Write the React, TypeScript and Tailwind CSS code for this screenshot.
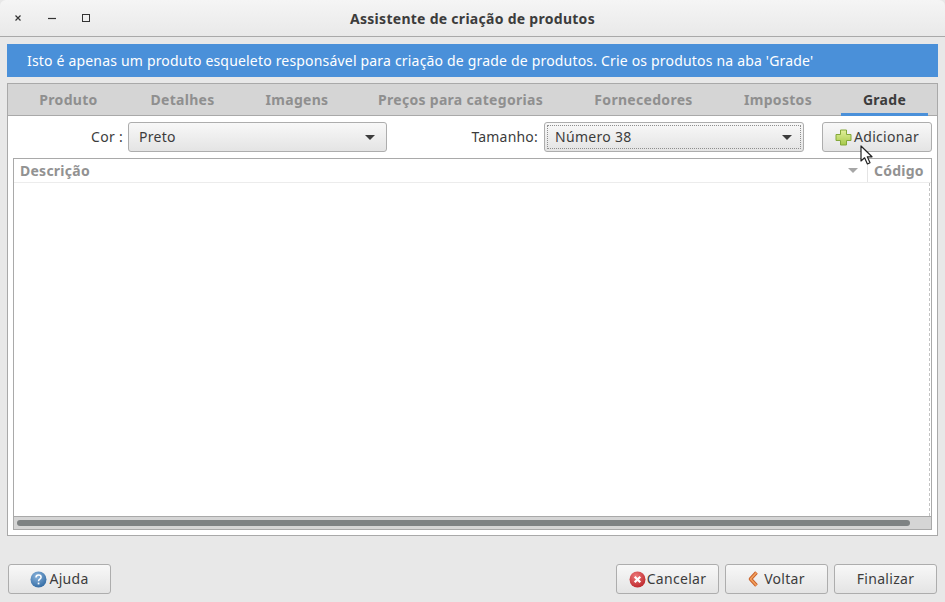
import React from "react";

const btn = "flex items-center justify-center h-[30px] rounded-[3px] border border-[#adadad] bg-gradient-to-b from-[#f8f8f8] to-[#e4e4e4] text-[14px] text-[#3c3c3c] tracking-[0.3px]";

function Caret({ color = "#3c3c3c" }: { color?: string }) {
  return (
    <svg width="10" height="5" viewBox="0 0 10 5" className="shrink-0 block">
      <path d="M0 0H10L5 5Z" fill={color} />
    </svg>
  );
}

function Combo({ value, width, focus }: { value: string; width: string; focus?: boolean }) {
  return (
    <div className={`${btn} ${width} !justify-start relative`}>
      {focus && <div className="absolute inset-[2px] border border-dotted border-[#8e8e8e] rounded-[1px]" />}
      <span className="flex-1 pl-[10px] pb-[2px]">{value}</span>
      <span className="mr-[11px]"><Caret /></span>
    </div>
  );
}

const tabs: [string, string][] = [
  ["Produto", "w-[111px]"],
  ["Detalhes", "w-[117px]"],
  ["Imagens", "w-[112px]"],
  ["Preços para categorias", "w-[215px]"],
  ["Fornecedores", "w-[151px]"],
  ["Impostos", "w-[118px]"],
];

export default function App() {
  return (
    <div className="w-[945px] h-[602px] overflow-hidden flex flex-col bg-[#e8e8e8] text-[#3c3c3c] relative" style={{ fontFamily: '"Noto Sans", sans-serif' }}>
      {/* Title bar */}
      <div className="h-[37px] shrink-0 flex items-center border-b border-[#a9a9a9] bg-gradient-to-b from-[#f5f5f5] to-[#e9e9e9] rounded-t-[6px] relative">
        <svg width="100" height="16" viewBox="0 0 100 16" className="absolute left-0 top-[10px]">
          <path d="M15.5 5.5l5 5M20.5 5.5l-5 5" stroke="#333" strokeWidth="1.2" fill="none" />
          <path d="M48 8.5h8" stroke="#333" strokeWidth="1.2" fill="none" />
          <rect x="82.5" y="4.5" width="7" height="7" stroke="#333" strokeWidth="1" fill="none" />
        </svg>
        <div className="flex-1 text-center text-[14px] font-bold text-[#3c3c3c] tracking-[0.28px]">Assistente de criação de produtos</div>
      </div>

      {/* Body */}
      <div className="flex-1 flex flex-col px-[7px] pt-[7px]">
        <div className="h-[33px] shrink-0 bg-[#4a90d9] text-white text-[14px] flex items-center pl-[20px] tracking-[0.185px]">
          Isto é apenas um produto esqueleto responsável para criação de grade de produtos. Crie os produtos na aba 'Grade'
        </div>

        {/* Notebook */}
        <div className="mt-[6px] h-[453px] shrink-0 w-[931px] border border-[#a9a9a9] bg-white flex flex-col">
          <div className="h-[32px] shrink-0 flex bg-[#d5d5d5] border-b border-[#a9a9a9] pl-[5px] text-[14px] font-bold tracking-[0.3px]">
            {tabs.map(([t, w]) => (
              <div key={t} className={`${w} flex items-center justify-center text-[#8f8f8f] pb-[1px]`}>{t}</div>
            ))}
            <div className="w-[95px] pl-[4px] pr-[4px] flex">
              <div className="flex-1 flex items-center justify-center text-[#3c3c3c] border-b-[3px] border-[#4a90d9] mb-[-1px] pt-[2px]">Grade</div>
            </div>
          </div>

          <div className="flex-1 flex flex-col px-[5px] pt-[6px] pb-[5px]">
            <div className="h-[30px] shrink-0 flex items-center">
              <span className="w-[110px] text-right text-[14px] mr-[5px] pb-[2px] tracking-[0.3px]">Cor :</span>
              <Combo value="Preto" width="w-[259px]" />
              <span className="ml-[83px] w-[68px] text-right text-[14px] whitespace-nowrap mr-[6px] pb-[2px] tracking-[0.2px]">Tamanho:</span>
              <Combo value="Número 38" width="w-[260px]" focus />
              <div className={`${btn} w-[110px] ml-[18px] gap-[2px]`}>
                <svg width="17" height="17" viewBox="0 0 17 17">
                  <defs>
                    <linearGradient id="pg" x1="0" y1="0" x2="0" y2="1">
                      <stop offset="0" stopColor="#e2f09a" />
                      <stop offset="1" stopColor="#a6c94a" />
                    </linearGradient>
                  </defs>
                  <path d="M5.5 1h6v4.5H16v6h-4.5V16h-6v-4.5H1v-6h4.5Z" fill="url(#pg)" stroke="#84a83a" strokeWidth="1" />
                </svg>
                <span className="pb-[2px]">Adicionar</span>
              </div>
            </div>

            {/* Table */}
            <div className="mt-[6px] flex-1 flex flex-col border border-[#a9a9a9]">
              <div className="h-[24px] shrink-0 flex border-b border-[#ececec] text-[14px] font-bold text-[#929292] tracking-[0.25px]">
                <div className="flex-1 flex items-center pl-[6px]">
                  <span className="flex-1">Descrição</span>
                  <span className="mr-[9px]"><Caret color="#a6a6a6" /></span>
                </div>
                <div className="w-[64px] border-l border-[#e4e4e4] flex items-center pl-[6px]">Código</div>
              </div>
              <div className="flex-1 flex justify-end">
                <div className="w-0 border-r border-dashed border-[#c4c4c4] mr-[1px]" />
              </div>
              <div className="h-[13px] shrink-0 bg-[#d5d5d5] border-t border-[#a9a9a9] flex items-center pl-[3px]">
                <div className="w-[893px] h-[6px] rounded-full bg-[#7e8283]" />
              </div>
            </div>
          </div>
        </div>

        {/* Footer */}
        <div className="mt-[28px] flex items-start pl-[1px]">
          <div className={`${btn} w-[103px] gap-[2px]`}>
            <svg width="17" height="17" viewBox="0 0 17 17">
              <defs>
                <radialGradient id="hg" cx="0.4" cy="0.3" r="0.8">
                  <stop offset="0" stopColor="#8ab4dc" />
                  <stop offset="1" stopColor="#2c659f" />
                </radialGradient>
              </defs>
              <circle cx="8.5" cy="8.5" r="8" fill="url(#hg)" />
              <path d="M6 6.5c0-1.6 1.2-2.5 2.6-2.5s2.5.9 2.5 2.2c0 2-2.6 2-2.6 4" stroke="#fff" strokeWidth="1.5" fill="none" />
              <rect x="7.7" y="11.6" width="1.7" height="1.8" fill="#fff" />
            </svg>
            <span className="pb-[2px]">Ajuda</span>
          </div>
          <div className="flex-1" />
          <div className={`${btn} w-[103px] gap-[1px]`}>
            <svg width="17" height="17" viewBox="0 0 17 17">
              <defs>
                <radialGradient id="cg" cx="0.4" cy="0.3" r="0.8">
                  <stop offset="0" stopColor="#ee7a7a" />
                  <stop offset="1" stopColor="#b81f24" />
                </radialGradient>
              </defs>
              <circle cx="8.5" cy="8.5" r="8" fill="url(#cg)" />
              <path d="M5.7 5.7l5.6 5.6M11.3 5.7l-5.6 5.6" stroke="#fff" strokeWidth="2.2" fill="none" />
            </svg>
            <span className="pb-[2px]">Cancelar</span>
          </div>
          <div className={`${btn} w-[103px] ml-[6px] gap-[5px]`}>
            <svg width="11" height="16" viewBox="0 0 11 16">
              <path d="M8.5 1.5L2.5 8l6 6.5" stroke="#c9622c" strokeWidth="3.6" fill="none" strokeLinejoin="round" />
              <path d="M8.5 1.5L2.5 8l6 6.5" stroke="#f4a25e" strokeWidth="1.6" fill="none" strokeLinejoin="round" />
            </svg>
            <span className="pb-[2px]">Voltar</span>
          </div>
          <div className={`${btn} w-[103px] ml-[6px]`}><span className="pb-[2px]">Finalizar</span></div>
          <div className="w-[1px]" />
        </div>
      </div>

      {/* Mouse pointer */}
      <svg width="14" height="21" viewBox="0 0 14 21" className="absolute left-[860px] top-[145px]">
        <path d="M1 1v15l3.6-3.2L7.4 19l2.6-1.2-2.7-6H12Z" fill="#fff" stroke="#222" strokeWidth="1.2" strokeLinejoin="round" />
      </svg>
    </div>
  );
}
